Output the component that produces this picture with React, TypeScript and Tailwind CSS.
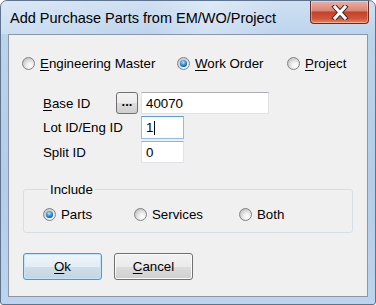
import React from 'react'

const font = { fontFamily: '"Liberation Sans", Arial, sans-serif' }

function Radio({ checked = false }: { checked?: boolean }) {
  return (
    <span className="flex h-[13px] w-[13px] shrink-0 items-center justify-center rounded-full border border-[#7f8287] bg-[radial-gradient(circle_at_65%_70%,#ffffff_0%,#f0f0f0_30%,#c8c8c8_75%,#b9b9b9_100%)]">
      {checked && (
        <span className="h-[7px] w-[7px] rounded-full bg-[radial-gradient(circle_at_45%_35%,#b9ecff_0%,#3a9be0_40%,#0b4a86_80%,#062d55_100%)]" />
      )}
    </span>
  )
}

function RadioItem({
  label,
  mnemonic,
  checked,
  className = '',
}: {
  label: string
  mnemonic?: boolean
  checked?: boolean
  className?: string
}) {
  return (
    <div className={`flex h-[16px] items-center gap-[5px] ${className}`}>
      <Radio checked={checked} />
      <span className="leading-[15px]">
        {mnemonic ? (
          <>
            <span className="underline underline-offset-[2px]">{label[0]}</span>
            {label.slice(1)}
          </>
        ) : (
          label
        )}
      </span>
    </div>
  )
}

function TextBox({
  value,
  width,
  height,
  focused = false,
  caret = false,
}: {
  value: string
  width: string
  height: string
  focused?: boolean
  caret?: boolean
}) {
  return (
    <div
      className={`flex items-center bg-white pl-[4px] ${width} ${height} border ${
        focused
          ? 'border-[#8fbde8] border-t-[#5f9fd8]'
          : 'border-[#dfe3e8] border-t-[#abadb3]'
      }`}
    >
      <span className="leading-[15px]">{value}</span>
      {caret && <span className="ml-[1px] h-[14px] w-[1px] bg-black" />}
    </div>
  )
}

export default function App() {
  return (
    <div
      style={font}
      className="flex h-[305px] w-[376px] flex-col overflow-hidden rounded-t-[7px] rounded-b-[3px] border border-[#5f738c] bg-[linear-gradient(180deg,#cfe0f2_0%,#bcd3ec_12%,#b3cce8_60%,#bcd4ee_100%)] text-[13.3px] text-black"
    >
      {/* title bar */}
      <div className="flex h-[33px] shrink-0 items-start justify-between bg-[linear-gradient(100deg,rgba(255,255,255,0.25)_0%,rgba(255,255,255,0)_40%,rgba(255,255,255,0.3)_55%,rgba(255,255,255,0)_75%)]">
        <span className="pl-[9px] pt-[9px] text-[14.5px] leading-[17px]">
          Add Purchase Parts from EM/WO/Project
        </span>
        <div className="mr-[6px] flex h-[23px] w-[59px] items-center justify-center rounded-b-[4px] border border-t-0 border-[#6b2a22] bg-[linear-gradient(180deg,#eab0a4_0%,#dc8472_45%,#c4402a_50%,#d0553b_80%,#e08a62_100%)] shadow-[inset_0_0_0_1px_rgba(255,255,255,0.35)]">
          <svg width="18" height="15" viewBox="0 0 18 15">
            <path d="M4 2 L14 13 M14 2 L4 13" stroke="#4a2a26" strokeWidth="5" strokeLinecap="square" />
            <path d="M4 2 L14 13 M14 2 L4 13" stroke="#ffffff" strokeWidth="3" strokeLinecap="square" />
          </svg>
        </div>
      </div>

      {/* client area */}
      <div className="mx-[7px] flex h-[263px] flex-col border border-[#8b97a5] bg-[#f0f0f0] pl-[13px] pt-[20px]">
        <div className="flex">
          <RadioItem label="Engineering Master" mnemonic className="w-[155px]" />
          <RadioItem label="Work Order" mnemonic checked className="w-[110px]" />
          <RadioItem label="Project" mnemonic />
        </div>

        <div className="mt-[21px] flex items-center pl-[21px]">
          <span className="w-[73px] leading-[15px]">
            <span className="underline underline-offset-[2px]">B</span>ase ID
          </span>
          <div className="flex h-[22px] w-[22px] items-center justify-center rounded-[3px] border border-[#707070] bg-[linear-gradient(180deg,#f4f4f4_0%,#ebebeb_50%,#dddddd_51%,#cfcfcf_100%)] pb-[4px] text-[13px] font-bold leading-none">
            ...
          </div>
          <div className="ml-[3px]">
            <TextBox value="40070" width="w-[128px]" height="h-[22px]" />
          </div>
        </div>

        <div className="mt-[2px] flex items-center pl-[21px]">
          <span className="w-[98px] leading-[15px]">Lot ID/Eng ID</span>
          <TextBox value="1" width="w-[43px]" height="h-[23px]" focused caret />
        </div>

        <div className="mt-[2px] flex items-center pl-[21px]">
          <span className="w-[98px] leading-[15px]">Split ID</span>
          <TextBox value="0" width="w-[43px]" height="h-[22px]" />
        </div>

        <fieldset className="mt-[19px] ml-[1px] w-[330px] rounded-[3px] border border-[#d5dfe5] pb-[10px] pl-[19px] pt-[9px]">
          <legend className="ml-[5px] px-[2px] leading-[15px]">Include</legend>
          <div className="flex">
            <RadioItem label="Parts" checked className="w-[91px]" />
            <RadioItem label="Services" className="w-[105px]" />
            <RadioItem label="Both" />
          </div>
        </fieldset>

        <div className="ml-[1px] mt-[20px] flex gap-[12px]">
          <button className="flex h-[27px] w-[79px] items-center justify-center rounded-[3px] border border-[#3c9fdd] bg-[linear-gradient(180deg,#f0f6fa_0%,#e3edf4_50%,#d0dee8_51%,#c4d5e1_100%)] shadow-[inset_0_0_0_1px_#bfe6fb] leading-[15px]">
            <span className="underline underline-offset-[2px]">O</span>k
          </button>
          <button className="flex h-[27px] w-[79px] items-center justify-center rounded-[3px] border border-[#707070] bg-[linear-gradient(180deg,#f2f2f2_0%,#ebebeb_50%,#dddddd_51%,#cfcfcf_100%)] shadow-[inset_0_0_0_1px_#fbfbfb] leading-[15px]">
            <span className="underline underline-offset-[2px]">C</span>ancel
          </button>
        </div>
      </div>
    </div>
  )
}
